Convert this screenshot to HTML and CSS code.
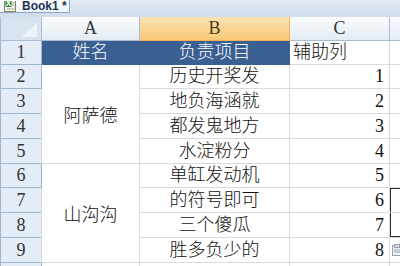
FILE: index.html
```html
<!DOCTYPE html>
<html lang="zh">
<head>
  <meta charset="UTF-8" />
  <title>Book1</title>
  <link rel="stylesheet" href="styles.css">
</head>
<body>

<div class="tabbar">
  <div class="tab">
    <svg class="tab-icon" width="12" height="11" viewBox="0 0 12 11">
      <rect x="0.5" y="-1" width="11" height="11.5" fill="#f4f4ee" stroke="#7a8a6a" />
      <rect x="1.5" y="-2" width="6" height="8" fill="#2f8a3a" />
      <path d="M2.5 -1 L6.5 5 M6.5 -1 L2.5 5" stroke="#fff" stroke-width="1.3" />
      <path d="M8 2 H10.5 M8 4 H10.5 M3 8 H10.5" stroke="#9aa88a" />
    </svg>
    <span class="tab-name">Book1 *</span>
  </div>
</div>
<div class="band"></div>

<table class="sheet">
  <colgroup>
    <col class="w-head">
    <col class="w-a">
    <col class="w-b">
    <col class="w-c">
    <col class="w-d">
  </colgroup>
  <thead>
    <tr class="col-heads">
      <th class="corner"></th>
      <th>A</th>
      <th class="sel">B</th>
      <th>C</th>
      <th></th>
    </tr>
  </thead>
  <tbody>
    <tr class="first">
      <th>1</th>
      <td class="title">姓名</td>
      <td class="title">负责项目</td>
      <td class="left">辅助列</td>
      <td></td>
    </tr>
    <tr>
      <th>2</th>
      <td class="merged" rowspan="4">阿萨德</td>
      <td>历史开奖发</td>
      <td class="num">1</td>
      <td></td>
    </tr>
    <tr>
      <th>3</th>
      <td>地负海涵就</td>
      <td class="num">2</td>
      <td></td>
    </tr>
    <tr>
      <th>4</th>
      <td>都发鬼地方</td>
      <td class="num">3</td>
      <td></td>
    </tr>
    <tr>
      <th>5</th>
      <td>水淀粉分</td>
      <td class="num">4</td>
      <td></td>
    </tr>
    <tr>
      <th>6</th>
      <td class="merged" rowspan="4">山沟沟</td>
      <td>单缸发动机</td>
      <td class="num">5</td>
      <td></td>
    </tr>
    <tr>
      <th>7</th>
      <td>的符号即可</td>
      <td class="num">6</td>
      <td class="mark-top"></td>
    </tr>
    <tr>
      <th>8</th>
      <td>三个傻瓜</td>
      <td class="num">7</td>
      <td class="mark-bottom"></td>
    </tr>
    <tr>
      <th>9</th>
      <td>胜多负少的</td>
      <td class="num">8</td>
      <td class="paste">
        <svg width="10" height="12" viewBox="0 0 10 12">
          <rect x="0.5" y="1.5" width="9" height="10" fill="#eef1f5" stroke="#9aa3ad" />
          <rect x="2.5" y="0.5" width="5" height="3" fill="#d7dde4" stroke="#9aa3ad" />
          <path d="M2 6 H8 M2 8 H8" stroke="#9aa3ad" />
        </svg>
      </td>
    </tr>
    <tr class="next">
      <th></th>
      <td></td>
      <td></td>
      <td></td>
      <td></td>
    </tr>
  </tbody>
</table>

</body>
</html>
```

FILE: styles.css
```css
* { box-sizing: border-box; }
body {
  margin: 0;
  width: 400px;
  height: 266px;
  overflow: hidden;
  background: #fff;
  font-family: "Liberation Serif", "Noto Sans CJK SC", serif;
}
.tabbar {
  height: 13px;
  background: linear-gradient(#e3ebf5, #d3dfee);
  overflow: hidden;
}
.tab {
  width: 70px;
  height: 13px;
  display: flex;
  align-items: center;
  gap: 6px;
  padding-left: 4px;
  background: linear-gradient(#ffffff, #eef3f9);
  border-right: 1px solid #8da6c6;
  border-bottom: 1px solid #8da6c6;
}
.tab-name {
  font-family: "Liberation Sans", Arial, sans-serif;
  font-weight: bold;
  font-size: 12px;
  line-height: 12px;
  color: #1b3456;
}
.band {
  height: 4px;
  background: #d2deee;
}
.sheet {
  border-collapse: collapse;
  table-layout: fixed;
  width: 460px;
}
.w-head { width: 41px; }
.w-a { width: 98px; }
.w-b { width: 150px; }
.w-c { width: 100px; }
.w-d { width: 71px; }

.sheet th,
.sheet td {
  padding: 0;
  overflow: hidden;
  white-space: nowrap;
  line-height: 18px;
}
.sheet td {
  border: 1px solid #d7dbe2;
  text-align: center;
  font-size: 18px;
  font-weight: 300;
  color: #111;
}
.col-heads {
  height: 23px;
}
.col-heads th {
  font-weight: normal;
  font-size: 18px;
  color: #333;
  border: 1px solid #a9bcd4;
  border-top: none;
  background: linear-gradient(#f9fbfd, #e4ebf4);
}
.col-heads th.sel {
  color: #4d3c1a;
  background: linear-gradient(#fbe3b4, #f7c878);
  border-color: #f0b35a;
}
.col-heads th.corner {
  background-color: #d9e4f1;
  background-image: linear-gradient(to bottom right, transparent 50%, #eef3f9 50%);
  background-size: 16px 14px;
  background-position: right 4px bottom 3px;
  background-repeat: no-repeat;
}
tbody th {
  font-weight: normal;
  font-size: 18px;
  color: #333;
  background: #e4ecf7;
  border: 1px solid #9fb6d0;
}
tbody tr {
  height: 24.75px;
}
tbody tr.first {
  height: 24px;
}
.sheet td.title {
  background: #3a6092;
  color: #fff;
  border-color: #3a6092;
}
.sheet td.left {
  text-align: left;
  padding-left: 3px;
}
.sheet td.num {
  text-align: right;
  padding-right: 5px;
}
.sheet td.merged {
  padding-top: 4px;
}
.sheet td.mark-top {
  box-shadow: inset 1px 1px 0 #2a2a2a;
}
.sheet td.mark-bottom {
  box-shadow: inset 1px -1px 0 #2a2a2a;
}
.sheet td.paste {
  text-align: left;
  padding-left: 2px;
  line-height: 0;
}
```
